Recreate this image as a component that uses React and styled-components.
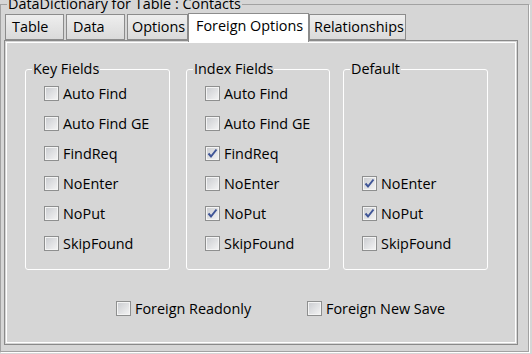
import styled, { createGlobalStyle } from "styled-components";

const GlobalStyle = createGlobalStyle`
  html, body {
    margin: 0;
    background: #d6d6d6;
  }
  body {
    width: 532px;
    height: 354px;
    overflow: hidden;
    font-family: "Open Sans", "Noto Sans", sans-serif;
    font-size: 14.4px;
    color: #000;
  }
`;

const Frame = styled.fieldset`
  margin: -5px 0 0 0;
  padding: 0 10px 6px 3px;
  width: 529px;
  box-sizing: border-box;
  border: 1px solid #a2a2a2;
  box-shadow: 1px 1px 0 #fff;
  min-inline-size: 0;
`;

const FrameLegend = styled.legend`
  margin-left: 3px;
  padding: 0 1px;
  line-height: 18px;
`;

const TabStrip = styled.div`
  display: flex;
  align-items: flex-end;
  height: 27px;
  padding-left: 1px;
`;

const Tab = styled.div`
  position: relative;
  width: ${(p) => p.$w}px;
  margin-right: ${(p) => p.$mr || 0}px;
  box-sizing: border-box;
  height: ${(p) => (p.$active ? 29 : 26)}px;
  margin-bottom: ${(p) => (p.$active ? -2 : 0)}px;
  padding-left: ${(p) => p.$pl}px;
  border: 1px solid #8c8c8c;
  border-bottom: ${(p) => (p.$active ? "none" : "1px solid #8c8c8c")};
  background: ${(p) =>
    p.$active ? "#fff" : "linear-gradient(#eeeeee, #dadada)"};
  line-height: 24px;
  white-space: nowrap;
  z-index: ${(p) => (p.$active ? 1 : 0)};
`;

const Panel = styled.div`
  height: 305px;
  box-sizing: border-box;
  border: 1px solid #8a8a8a;
  box-shadow: inset 0 0 0 1px #d6d6d6, inset 0 0 0 2px #fff;
  padding: 19px 0 0 20px;
`;

const GroupRow = styled.div`
  display: flex;
`;

const Group = styled.fieldset`
  margin: 0 0 0 ${(p) => p.$ml}px;
  width: ${(p) => p.$w}px;
  box-sizing: border-box;
  padding: 0 0 11px 6px;
  border: 1px solid #fff;
  border-radius: 3px;
  min-inline-size: 0;
`;

const GroupLegend = styled.legend`
  padding: 0 1px;
  line-height: 18px;
`;

const Rows = styled.div`
  display: flex;
  flex-direction: column;
  justify-content: flex-end;
  height: 180px;
  padding-left: 12px;
`;

const Row = styled.label`
  display: flex;
  align-items: center;
  gap: 4px;
  height: 30px;
  white-space: nowrap;
`;

const Box = styled.span`
  flex: none;
  width: 15px;
  height: 15px;
  box-sizing: border-box;
  border: 1px solid #8e8f8f;
  box-shadow: inset 0 0 0 1px #f4f4f4;
  background: linear-gradient(135deg, #c9cbcf 0%, #f5f5f5 100%);
  display: flex;
  align-items: center;
  justify-content: center;
`;

const BottomRow = styled.div`
  display: grid;
  grid-template-columns: 191px auto;
  margin: 28px 0 0 91px;
`;

const BottomItem = styled(Row)`
  height: 20px;
`;

function Check({ checked }) {
  return (
    <Box>
      {checked && (
        <svg width="13" height="13" viewBox="0 0 13 13">
          <path
            d="M2.5 6.5 L5 9.5 L10.5 2.5"
            fill="none"
            stroke="#3f5597"
            strokeWidth="2"
          />
        </svg>
      )}
    </Box>
  );
}

const tabs = [
  { label: "Table", w: 59, mr: 2, pl: 6 },
  { label: "Data", w: 59, mr: 2, pl: 6 },
  { label: "Options", w: 61, mr: 0, pl: 4 },
  { label: "Foreign Options", w: 121, mr: 0, pl: 7, active: true },
  { label: "Relationships", w: 97, mr: 0, pl: 4 },
];

const names = ["Auto Find", "Auto Find GE", "FindReq", "NoEnter", "NoPut", "SkipFound"];

const groups = [
  { title: "Key Fields", w: 145, ml: 0, items: names.map((n) => [n, false]) },
  {
    title: "Index Fields",
    w: 144,
    ml: 16,
    items: names.map((n) => [n, n === "FindReq" || n === "NoPut"]),
  },
  {
    title: "Default",
    w: 145,
    ml: 13,
    items: [
      ["NoEnter", true],
      ["NoPut", true],
      ["SkipFound", false],
    ],
  },
];

export default function App() {
  return (
    <>
      <GlobalStyle />
      <Frame>
        <FrameLegend>DataDictionary for Table : Contacts</FrameLegend>
        <TabStrip>
          {tabs.map((t) => (
            <Tab key={t.label} $w={t.w} $mr={t.mr} $pl={t.pl} $active={t.active}>
              {t.label}
            </Tab>
          ))}
        </TabStrip>
        <Panel>
          <GroupRow>
            {groups.map((g) => (
              <Group key={g.title} $w={g.w} $ml={g.ml}>
                <GroupLegend>{g.title}</GroupLegend>
                <Rows>
                  {g.items.map(([n, c]) => (
                    <Row key={n}>
                      <Check checked={c} />
                      {n}
                    </Row>
                  ))}
                </Rows>
              </Group>
            ))}
          </GroupRow>
          <BottomRow>
            <BottomItem>
              <Check />
              Foreign Readonly
            </BottomItem>
            <BottomItem>
              <Check />
              Foreign New Save
            </BottomItem>
          </BottomRow>
        </Panel>
      </Frame>
    </>
  );
}
